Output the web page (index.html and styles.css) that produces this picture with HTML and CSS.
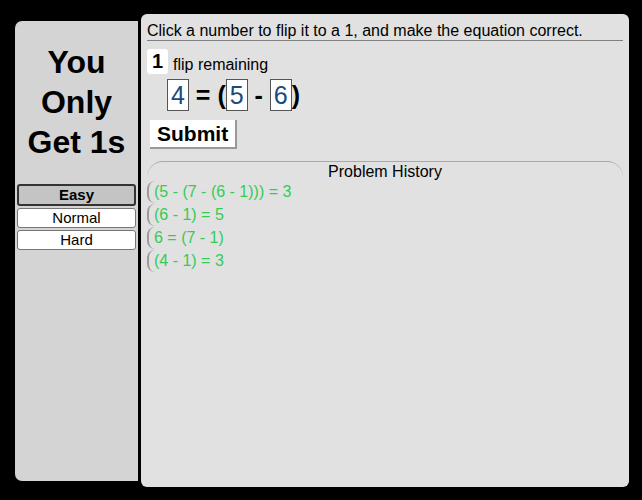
FILE: index.html
```html
<!DOCTYPE html>
<html lang="en">
<head>
  <meta charset="UTF-8">
  <title>You Only Get 1s</title>
  <link rel="stylesheet" href="styles.css">
</head>
<body>
  <div class="app">
    <div class="sidebar">
      <h1 class="title">You Only Get 1s</h1>
      <div class="levels">
        <div class="level active">Easy</div>
        <div class="level">Normal</div>
        <div class="level">Hard</div>
      </div>
    </div>

    <div class="main">
      <div class="instructions">Click a number to flip it to a 1, and make the equation correct.</div>

      <div class="flips"><span class="flipCount">1</span> flip remaining</div>

      <div class="equation">
        <span class="num">4</span> = (<span class="num">5</span> - <span class="num">6</span>)
      </div>

      <button class="submit">Submit</button>

      <div class="history">
        <div class="historyTitle">Problem History</div>
        <div class="entry">(5 - (7 - (6 - 1))) = 3</div>
        <div class="entry">(6 - 1) = 5</div>
        <div class="entry">6 = (7 - 1)</div>
        <div class="entry">(4 - 1) = 3</div>
      </div>
    </div>
  </div>
</body>
</html>
```

FILE: styles.css
```css
html,body{margin:0;padding:0;height:100%;background:#000;}
body{font-family:"Liberation Sans",Arial,sans-serif;font-size:16px;color:#000;}

.app{display:flex;align-items:flex-start;padding-left:15px;gap:3px;}

/* ---- left column ---- */
.sidebar{width:123px;height:460px;margin-top:21px;background:#d4d4d4;
         border-radius:7px 0 0 7px;box-sizing:border-box;padding:0 2px;}
.title{margin:21px 0 22px;font-size:32px;line-height:40px;text-align:center;font-weight:bold;}
.levels{display:flex;flex-direction:column;gap:2px;font-size:15px;}
.level{height:20px;line-height:18px;box-sizing:border-box;background:#fff;
       border:1px solid #777;border-radius:3px;text-align:center;}
.level.active{height:22px;line-height:18px;background:#c4c4c4;border:2px solid #333;font-weight:bold;}

/* ---- game panel ---- */
.main{width:488px;height:473px;margin-top:14px;background:#e1e1e1;border-radius:6px;
      box-sizing:border-box;padding:8px 6px 0 6px;}
.instructions{border-bottom:1px solid #808080;line-height:18px;}

.flips{margin-top:8px;display:flex;align-items:flex-end;gap:5px;}
.flipCount{display:inline-block;width:21px;height:25px;background:#fff;border-radius:3px;
           font-size:20px;font-weight:bold;text-align:center;line-height:25px;}

.equation{margin:5px 0 0 20px;font-size:25px;font-weight:bold;line-height:31px;}
.num{display:inline-block;font-weight:normal;color:#1b4a7e;background:#fff;
     border:1px solid #555;padding:0 3px;line-height:30px;}

.submit{margin:9px 0 0 3px;font-family:inherit;font-size:21px;font-weight:bold;background:#fff;
        border:none;border-right:2px solid #999;border-bottom:2px solid #999;
        padding:2px 7px 1px 7px;line-height:24px;}

.history{margin-top:12px;border-top:1px solid #a8a8a8;border-radius:16px 16px 0 0;
         padding-top:1px;}
.historyTitle{text-align:center;line-height:18px;}
.entry{color:#33cc55;line-height:22px;padding-left:5px;margin-bottom:1px;
       border-left:2px solid #9a9a9a;border-radius:8px 0 0 8px;}
```
